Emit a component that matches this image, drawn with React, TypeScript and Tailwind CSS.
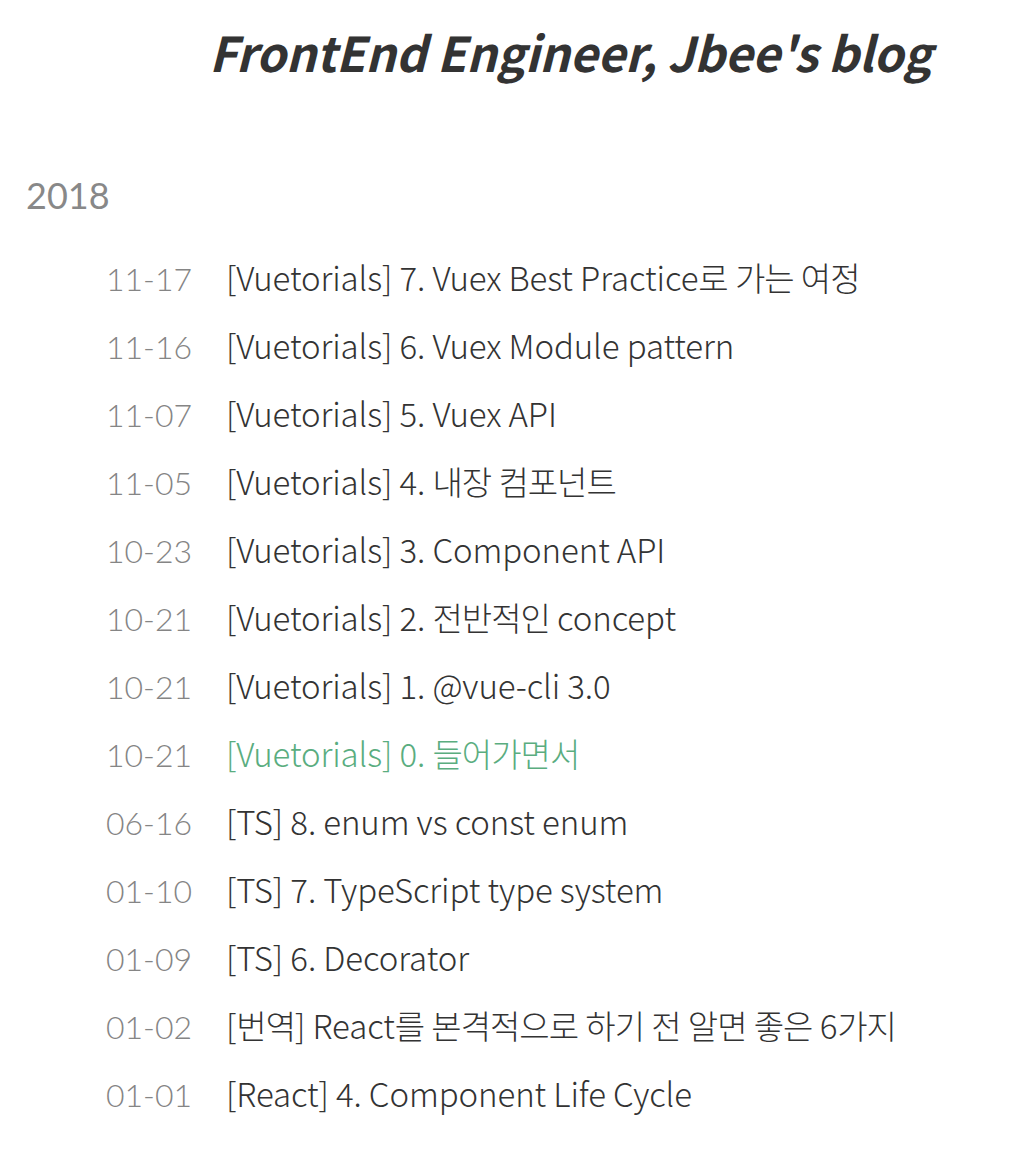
const posts = [
  { date: '11-17', title: '[Vuetorials] 7. Vuex Best Practice로 가는 여정' },
  { date: '11-16', title: '[Vuetorials] 6. Vuex Module pattern' },
  { date: '11-07', title: '[Vuetorials] 5. Vuex API' },
  { date: '11-05', title: '[Vuetorials] 4. 내장 컴포넌트' },
  { date: '10-23', title: '[Vuetorials] 3. Component API' },
  { date: '10-21', title: '[Vuetorials] 2. 전반적인 concept' },
  { date: '10-21', title: '[Vuetorials] 1. @vue-cli 3.0' },
  { date: '10-21', title: '[Vuetorials] 0. 들어가면서', active: true },
  { date: '06-16', title: '[TS] 8. enum vs const enum' },
  { date: '01-10', title: '[TS] 7. TypeScript type system' },
  { date: '01-09', title: '[TS] 6. Decorator' },
  { date: '01-02', title: '[번역] React를 본격적으로 하기 전 알면 좋은 6가지' },
  { date: '01-01', title: '[React] 4. Component Life Cycle' },
];

// hangul glyphs run a little narrower than latin in the original font
function PostTitle({ text }: { text: string }) {
  const parts = text.split(/([\uAC00-\uD7A3]+)/);
  return (
    <>
      {parts.map((part, i) =>
        /[\uAC00-\uD7A3]/.test(part) ? (
          <span key={i} className="tracking-[-1px]">
            {part}
          </span>
        ) : (
          part
        )
      )}
    </>
  );
}

export default function App() {
  return (
    <div className="min-h-screen bg-white">
      {/* Header */}
      <header className="pt-[16px] pl-[209px]">
        <h1 className="font-['Noto_Sans_CJK_KR',sans-serif] text-[48px] leading-[70px] font-bold italic text-[#333] tracking-[-0.3px]">
          FrontEnd Engineer, Jbee's blog
        </h1>
      </header>

      {/* Archive */}
      <section className="px-[26px] mt-[87px]">
        <h2 className="font-['Lato',sans-serif] text-[36px] leading-[44px] text-[#888]">2018</h2>
        <ul className="mt-[26px] pl-[80px]">
          {posts.map((post, i) => (
            <li key={i} className="flex items-baseline h-[68px]">
              <span className="w-[120px] shrink-0 font-['Lato',sans-serif] text-[32px] leading-[68px] font-light text-[#858585]">
                {post.date}
              </span>
              <a
                href="#"
                className={`font-['Noto_Sans_CJK_KR',sans-serif] text-[33px] leading-[68px] font-light tracking-[-0.1px] ${
                  post.active ? 'text-[#5aad7f]' : 'text-[#333]'
                }`}
              >
                <PostTitle text={post.title} />
              </a>
            </li>
          ))}
        </ul>
      </section>
    </div>
  );
}
